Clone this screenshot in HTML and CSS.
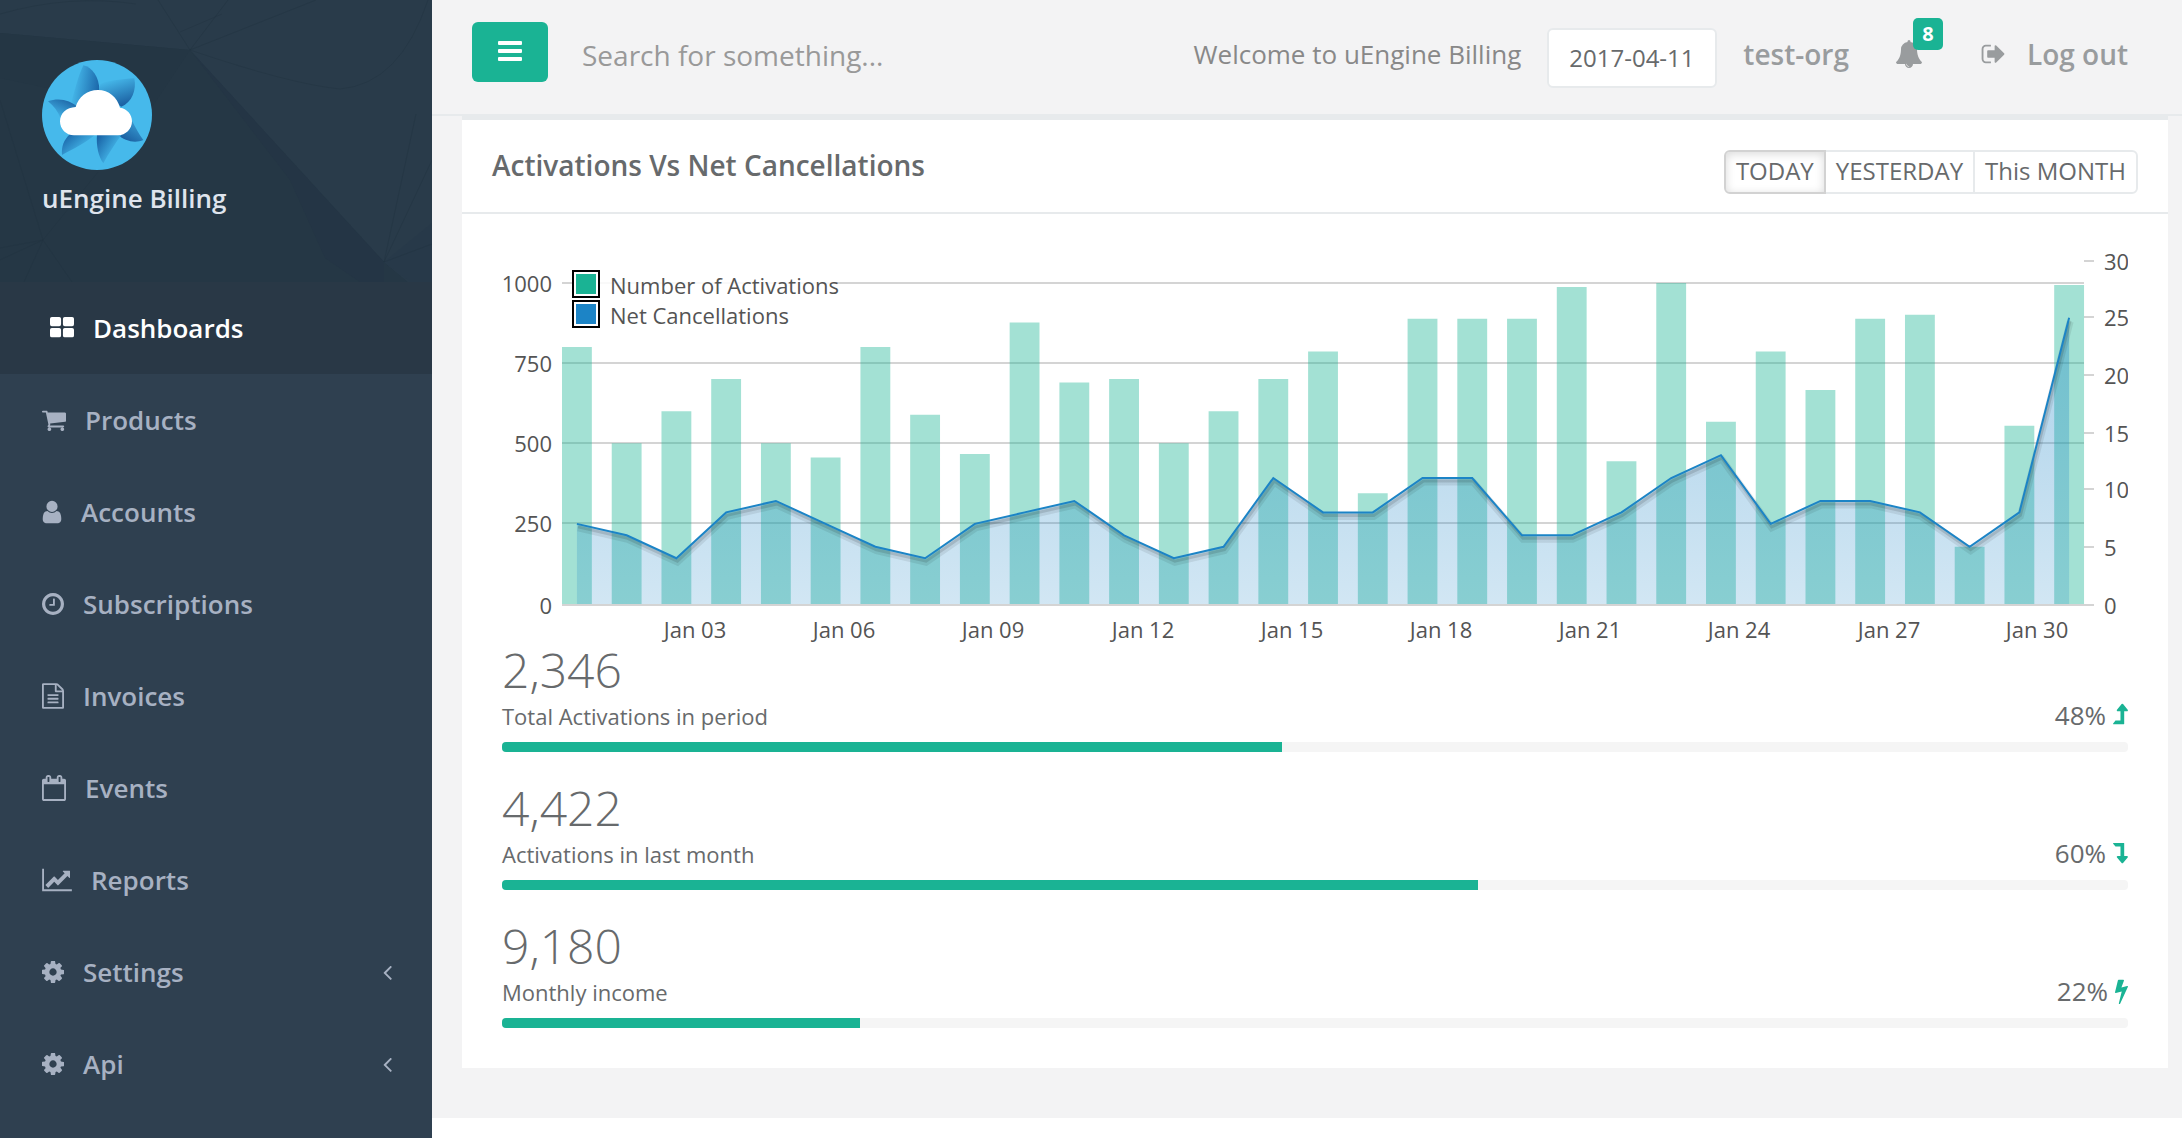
FILE: index.html
```html
<!DOCTYPE html>
<html lang="en">
<head>
<meta charset="utf-8">
<meta name="viewport" content="width=device-width, initial-scale=1">
<title>uEngine Billing</title>
<link rel="stylesheet" href="styles.css">
</head>
<body>
<div class="layout">
  <aside class="sidebar">
    <div class="brand">
      <svg class="brand-pattern" viewBox="0 0 432 282" preserveAspectRatio="none" aria-hidden="true">
        <rect width="432" height="282" fill="#253745"/>
        <path d="M0 0H432V282H408L384 262L190 50L0 33Z" fill="#293b4a"/>
        <path d="M0 33L190 50L150 110L0 78Z" fill="#243644"/>
        <path d="M190 50L384 262V282H360L325 258L290 180Z" fill="#243545"/>
        <path d="M384 262L432 223V282H410Z" fill="#273949"/>
        <path d="M0 14Q70 -6 136 4M158 0L190 50L228 0M190 50L316 0M190 50Q290 84 340 89Q400 84 428 0M180 32L222 14M432 160L384 262L416 114M384 262L432 244M0 100L43 240L24 282M43 240L72 282M0 248L43 240L98 172M0 260L43 240" fill="none" stroke="#223341" stroke-opacity=".45"/>
      </svg>
      <svg class="brand-logo" viewBox="0 0 330 330" role="img" aria-label="uEngine logo">
        <defs>
          <linearGradient id="b1" x1="1" y1=".6" x2=".1" y2=".4"><stop offset="0" stop-color="#1a65a8"/><stop offset="1" stop-color="#46b9eb"/></linearGradient>
          <linearGradient id="b2" x1=".8" y1="1" x2=".4" y2="0"><stop offset="0" stop-color="#17589b"/><stop offset="1" stop-color="#46b9eb"/></linearGradient>
          <linearGradient id="b4" x1="0" y1=".2" x2=".7" y2=".7"><stop offset="0" stop-color="#1a65a8"/><stop offset="1" stop-color="#46b9eb"/></linearGradient>
          <linearGradient id="b5" x1="1" y1="0" x2=".3" y2="1"><stop offset="0" stop-color="#17589b"/><stop offset="1" stop-color="#46b9eb"/></linearGradient>
          <linearGradient id="b3" x1=".2" y1="1" x2=".7" y2="0"><stop offset="0" stop-color="#17589b"/><stop offset="1" stop-color="#46b9eb"/></linearGradient>
        </defs>
        <circle cx="165" cy="165" r="165" fill="#46b9eb"/>
        <path d="M124 16C150 22 172 50 172 92L150 120L85 140C95 100 108 50 124 16Z" fill="url(#b1)"/>
        <path d="M175 72C200 60 240 58 277 55C284 90 270 128 238 140L172 96Z" fill="url(#b2)"/>
        <path d="M245 145C262 160 278 205 304 240C280 250 250 245 225 222Z" fill="url(#b3)"/>
        <path d="M165 222C162 260 170 290 184 310C200 280 220 250 240 222Z" fill="url(#b4)"/>
        <path d="M84 222C65 240 58 260 60 285C95 265 130 250 162 222Z" fill="url(#b4)"/>
        <path d="M18 124C50 112 85 120 108 142L56 176C48 155 36 138 18 124Z" fill="url(#b5)"/>
        <path d="M96 226C72 226 54 207 54 184C54 160 74 142 101 141C109 112 135 90 168 90C200 90 226 112 234 143C255 146 270 163 270 184C270 207 251 226 228 226Z" fill="#fff"/>
      </svg>
      <strong class="brand-name">uEngine Billing</strong>
    </div>
    <nav class="menu">
      <a class="menu-item active" href="#"><svg class="icon w24" viewBox="64 0 1664 1792"><path d="M192 128h512a128 128 0 0 1 128 128v384a128 128 0 0 1-128 128h-512a128 128 0 0 1-128-128v-384a128 128 0 0 1 128-128zM1088 128h512a128 128 0 0 1 128 128v384a128 128 0 0 1-128 128h-512a128 128 0 0 1-128-128v-384a128 128 0 0 1 128-128zM192 896h512a128 128 0 0 1 128 128v384a128 128 0 0 1-128 128h-512a128 128 0 0 1-128-128v-384a128 128 0 0 1 128-128zM1088 896h512a128 128 0 0 1 128 128v384a128 128 0 0 1-128 128h-512a128 128 0 0 1-128-128v-384a128 128 0 0 1 128-128z"/></svg><span>Dashboards</span></a>
      <a class="menu-item" href="#"><svg class="icon w24" viewBox="64 0 1664 1792"><path d="M704 1536q0 52-38 90t-90 38-90-38-38-90 38-90 90-38 90 38 38 90zm896 0q0 52-38 90t-90 38-90-38-38-90 38-90 90-38 90 38 38 90zm128-1088v512q0 24-16.500 42.500t-40.500 21.500l-1044 122q13 60 13 70 0 16-24 64h920q26 0 45 19t19 45-19 45-45 19h-1024q-26 0-45-19t-19-45q0-11 8-31.500t16-36 21.500-40 15.500-29.500l-177-823h-204q-26 0-45-19t-19-45 19-45 45-19h256q16 0 28.500 6.500t19.500 15.500 13 24.500 8 26 5.500 29.500 4.500 26h1201q26 0 45 19t19 45z"/></svg><span>Products</span></a>
      <a class="menu-item" href="#"><svg class="icon w20" viewBox="256 0 1280 1792"><path d="M1536 1399q0 109-62.500 187t-150.500 78h-854q-88 0-150.500-78t-62.500-187q0-85 8.500-160.500t31.500-152 58.500-131 94-89 134.500-34.500q131 128 313 128t313-128q76 0 134.500 34.500t94 89 58.500 131 31.500 152 8.500 160.500zm-256-887q0 159-112.500 271.500t-271.500 112.500-271.500-112.500-112.500-271.500 112.500-271.500 271.500-112.500 271.500 112.500 112.500 271.500z"/></svg><span>Accounts</span></a>
      <a class="menu-item" href="#"><svg class="icon w22" viewBox="128 0 1536 1792"><path d="M1024 544v448q0 14-9 23t-23 9h-320q-14 0-23-9t-9-23v-64q0-14 9-23t23-9h224v-352q0-14 9-23t23-9h64q14 0 23 9t9 23zm416 352q0-148-73-273t-198-198-273-73-273 73-198 198-73 273 73 273 198 198 273 73 273-73 198-198 73-273zm224 0q0 209-103 385.500t-279.500 279.500-385.500 103-385.500-103-279.500-279.500-103-385.500 103-385.500 279.500-279.500 385.500-103 385.500 103 279.500 279.500 103 385.500z"/></svg><span>Subscriptions</span></a>
      <a class="menu-item" href="#"><svg class="icon w22" viewBox="128 0 1536 1792"><path d="M1596 380q28 28 48 76t20 88v1152q0 40-28 68t-68 28h-1344q-40 0-68-28t-28-68v-1600q0-40 28-68t68-28h896q40 0 88 20t76 48zm-444-244v376h376q-10-29-22-41l-313-313q-12-12-41-22zm384 1528v-1024h-416q-40 0-68-28t-28-68v-416h-768v1536h1280zm-1024-864q0-14 9-23t23-9h704q14 0 23 9t9 23v64q0 14-9 23t-23 9h-704q-14 0-23-9t-9-23v-64zm736 224q14 0 23 9t9 23v64q0 14-9 23t-23 9h-704q-14 0-23-9t-9-23v-64q0-14 9-23t23-9h704zm0 256q14 0 23 9t9 23v64q0 14-9 23t-23 9h-704q-14 0-23-9t-9-23v-64q0-14 9-23t23-9h704z"/></svg><span>Invoices</span></a>
      <a class="menu-item" href="#"><svg class="icon w24" viewBox="64 0 1664 1792"><path d="M192 1664h1408v-1024h-1408v1024zm384-1216v-288q0-14-9-23t-23-9h-64q-14 0-23 9t-9 23v288q0 14 9 23t23 9h64q14 0 23-9t9-23zm768 0v-288q0-14-9-23t-23-9h-64q-14 0-23 9t-9 23v288q0 14 9 23t23 9h64q14 0 23-9t9-23zm384-64v1280q0 52-38 90t-90 38h-1408q-52 0-90-38t-38-90v-1280q0-52 38-90t90-38h128v-96q0-66 47-113t113-47h64q66 0 113 47t47 113v96h384v-96q0-66 47-113t113-47h64q66 0 113 47t47 113v96h128q52 0 90 38t38 90z"/></svg><span>Events</span></a>
      <a class="menu-item" href="#"><svg class="icon w30" viewBox="0 0 2048 1792"><path d="M2048 1536v128h-2048v-1536h128v1408h1920zm-128-1248v435q0 21-19.500 29.500t-35.500-7.500l-121-121-633 633q-10 10-23 10t-23-10l-233-233-416 416-192-192 585-585q10-10 23-10t23 10l233 233 464-464-121-121q-16-16-7.500-35.500t29.500-19.500h435q14 0 23 9t9 23z"/></svg><span>Reports</span></a>
      <a class="menu-item" href="#"><svg class="icon w22" viewBox="128 0 1536 1792"><path id="cog" d="M1152 896q0-106-75-181t-181-75-181 75-75 181 75 181 181 75 181-75 75-181zm512-109v222q0 12-8 23t-20 13l-185 28q-19 54-39 91 35 50 107 138 10 12 10 25t-9 23q-27 37-99 108t-94 71q-12 0-26-9l-138-108q-44 23-91 38-16 136-29 186-7 28-36 28h-222q-14 0-24.500-8.500t-11.500-21.500l-28-184q-49-16-90-37l-141 107q-10 9-25 9-14 0-25-11-126-114-165-168-7-10-7-23 0-12 8-23 15-21 51-66.500t54-70.500q-27-50-41-99l-183-27q-13-2-21-12.500t-8-23.500v-222q0-12 8-23t19-13l186-28q14-46 39-92-40-57-107-138-10-12-10-24 0-10 9-23 26-36 98.500-107.500t94.500-71.500q13 0 26 10l138 107q44-23 91-38 16-136 29-186 7-28 36-28h222q14 0 24.500 8.500t11.500 21.500l28 184q49 16 90 37l142-107q9-9 24-9 13 0 25 10 129 119 165 170 7 8 7 22 0 12-8 23-15 21-51 66.500t-54 70.500q26 50 41 98l183 28q13 2 21 12.500t8 23.500z"/></svg><span>Settings</span><svg class="icon arrow" viewBox="576 0 640 1792"><path id="angle" d="M1203 544q0 13-10 23l-393 393 393 393q10 10 10 23t-10 23l-50 50q-10 10-23 10t-23-10l-466-466q-10-10-10-23t10-23l466-466q10-10 23-10t23 10l50 50q10 10 10 23z"/></svg></a>
      <a class="menu-item" href="#"><svg class="icon w22" viewBox="128 0 1536 1792"><use href="#cog"/></svg><span>Api</span><svg class="icon arrow" viewBox="576 0 640 1792"><use href="#angle"/></svg></a>
    </nav>
  </aside>

  <div class="page">
    <header class="topbar">
      <button class="toggle" type="button" aria-label="Toggle menu"><svg viewBox="0 0 24 24"><path d="M1 0H23Q24 0 24 1V3Q24 4 23 4H1Q0 4 0 3V1Q0 0 1 0ZM1 8H23Q24 8 24 9V11Q24 12 23 12H1Q0 12 0 11V9Q0 8 1 8ZM1 16H23Q24 16 24 17V19Q24 20 23 20H1Q0 20 0 19V17Q0 16 1 16Z"/></svg></button>
      <input class="search" type="text" placeholder="Search for something..." aria-label="Search">
      <span class="welcome">Welcome to uEngine Billing</span>
      <input class="date" type="text" value="2017-04-11" aria-label="Billing date">
      <a class="top-link" href="#">test-org</a>
      <a class="bell" href="#" aria-label="Notifications"><svg viewBox="0 0 1792 1792"><path d="M912 1696q0-16-16-16-59 0-101.500-42.500t-42.500-101.500q0-16-16-16t-16 16q0 73 51.500 124.500t124.500 51.500q16 0 16-16zm816-288q0 52-38 90t-90 38h-448q0 106-75 181t-181 75-181-75-75-181h-448q-52 0-90-38t-38-90q50-42 91-88t85-119.500 74.500-158.500 50-206 19.500-260q0-152 117-282.500t307-158.500q-8-19-8-39 0-40 28-68t68-28 68 28 28 68q0 20-8 39 190 28 307 158.500t117 282.500q0 139 19.500 260t50 206 74.500 158.500 85 119.500 91 88z"/></svg><span class="badge">8</span></a>
      <a class="top-link logout" href="#"><svg class="icon w24" viewBox="64 0 1568 1792"><path d="M704 1440q0 4 1 20t.5 26.500-3 23.500-10 19.500-20.500 6.500h-320q-119 0-203.500-84.500t-84.500-203.500v-704q0-119 84.500-203.500t203.500-84.500h320q13 0 22.500 9.500t9.500 22.500q0 4 1 20t.5 26.500-3 23.500-10 19.500-20.500 6.500h-320q-66 0-113 47t-47 113v704q0 66 47 113t113 47h312l11.500 1 11.500 3 8 5.500 7 9 2 13.500zm928-544q0 26-19 45l-544 544q-19 19-45 19t-45-19-19-45v-288h-448q-26 0-45-19t-19-45v-384q0-26 19-45t45-19h448v-288q0-26 19-45t45-19 45 19l544 544q19 19 19 45z"/></svg><span>Log out</span></a>
    </header>

    <main class="content">
      <section class="card">
        <div class="card-head">
          <h1 class="card-title">Activations Vs Net Cancellations</h1>
          <div class="range">
            <button class="range-btn pressed" type="button">TODAY</button>
            <button class="range-btn" type="button">YESTERDAY</button>
            <button class="range-btn" type="button">This MONTH</button>
          </div>
        </div>
        <div class="card-body">
          <svg class="chart" viewBox="0 0 1626 400" role="img" aria-label="Activations and net cancellations in January">
            <defs>
              <linearGradient id="area" gradientUnits="userSpaceOnUse" x1="0" y1="30" x2="0" y2="0">
                <stop offset="0" stop-color="#1c84c6" stop-opacity=".4"/>
                <stop offset="1" stop-color="#1c84c6" stop-opacity=".2"/>
              </linearGradient>
              <path id="trend" d="M.3 7L1.3 6L2.3 4L3.3 8L4.3 9L5.3 7L6.3 5L7.3 4L8.3 7L9.3 8L10.3 9L11.3 6L12.3 4L13.3 5L14.3 11L15.3 8L16.3 8L17.3 11L18.3 11L19.3 6L20.3 6L21.3 8L22.3 11L23.3 13L24.3 7L25.3 9L26.3 9L27.3 8L28.3 5L29.3 8L30.3 25" vector-effect="non-scaling-stroke"/>
            </defs>
            <path class="grid" d="M60 39H1582M60 119H1582M60 199H1582M60 279H1582M60 361H1592M1582 17H1592M1582 73H1592M1582 131H1592M1582 189H1592M1582 245H1592M1582 303H1592"/>
            <!-- one unit is one day across, one activation up -->
            <g transform="translate(60 360) scale(49.74 -.3213)">
              <path class="bars" d="M0 0V800h.6V0zM1 0V500h.6V0zM2 0V600h.6V0zM3 0V700h.6V0zM4 0V500h.6V0zM5 0V456h.6V0zM6 0V800h.6V0zM7 0V589h.6V0zM8 0V467h.6V0zM9 0V876h.6V0zM10 0V689h.6V0zM11 0V700h.6V0zM12 0V500h.6V0zM13 0V600h.6V0zM14 0V700h.6V0zM15 0V786h.6V0zM16 0V345h.6V0zM17 0V888h.6V0zM18 0V888h.6V0zM19 0V888h.6V0zM20 0V987h.6V0zM21 0V444h.6V0zM22 0V999h.6V0zM23 0V567h.6V0zM24 0V786h.6V0zM25 0V666h.6V0zM26 0V888h.6V0zM27 0V900h.6V0zM28 0V178h.6V0zM29 0V555h.6V0zM30 0V993h.6V0z"/>
            </g>
            <!-- one unit is one day across, one cancellation up -->
            <g transform="translate(60 360) scale(49.74 -11.45)">
              <path fill="url(#area)" d="M.3 0V7L1.3 6L2.3 4L3.3 8L4.3 9L5.3 7L6.3 5L7.3 4L8.3 7L9.3 8L10.3 9L11.3 6L12.3 4L13.3 5L14.3 11L15.3 8L16.3 8L17.3 11L18.3 11L19.3 6L20.3 6L21.3 8L22.3 11L23.3 13L24.3 7L25.3 9L26.3 9L27.3 8L28.3 5L29.3 8L30.3 25V0z"/>
            </g>
            <g transform="translate(61 364) scale(49.74 -11.45)"><use class="shade wide" href="#trend"/></g>
            <g transform="translate(61 363) scale(49.74 -11.45)"><use class="shade" href="#trend"/></g>
            <g transform="translate(60 360) scale(49.74 -11.45)"><use class="line" href="#trend"/></g>

            <rect x="70" y="25" width="264" height="60" fill="#fff" fill-opacity=".85"/>
            <g class="key">
              <rect x="71" y="27" width="26" height="26"/><rect x="71" y="57" width="26" height="26"/>
            </g>
            <rect x="74" y="30" width="20" height="20" fill="#1ab394"/>
            <rect x="74" y="60" width="20" height="20" fill="#1c84c6"/>
            <g class="labels">
              <text x="108" y="50">Number of Activations</text><text x="108" y="80">Net Cancellations</text>
            </g>
            <g class="labels end">
              <text x="50" y="48">1000</text><text x="50" y="128">750</text><text x="50" y="208">500</text><text x="50" y="288">250</text><text x="50" y="370">0</text>
            </g>
            <g class="labels">
              <text x="1602" y="26">30</text><text x="1602" y="82">25</text><text x="1602" y="140">20</text><text x="1602" y="198">15</text><text x="1602" y="254">10</text><text x="1602" y="312">5</text><text x="1602" y="370">0</text>
            </g>
            <g class="labels middle">
              <text x="193" y="394">Jan 03</text><text x="342" y="394">Jan 06</text><text x="491" y="394">Jan 09</text><text x="641" y="394">Jan 12</text><text x="790" y="394">Jan 15</text><text x="939" y="394">Jan 18</text><text x="1088" y="394">Jan 21</text><text x="1237" y="394">Jan 24</text><text x="1387" y="394">Jan 27</text><text x="1535" y="394">Jan 30</text>
            </g>
          </svg>
          <ul class="stats">
            <li>
              <h2 class="figure">2,346</h2>
              <div class="caption"><span>Total Activations in period</span><span class="share">48% <svg class="w15" viewBox="386 0 1028 1792"><path id="level" d="M1405 595q-18 37-58 37h-192v864q0 14-9 23t-23 9h-704q-21 0-29-18-8-20 4-35l160-192q9-11 25-11h320v-640h-192q-40 0-58-37-17-37 9-68l320-384q18-22 49-22t49 22l320 384q27 32 9 68z"/></svg></span></div>
              <div class="track"><div class="fill" style="width:48%"></div></div>
            </li>
            <li>
              <h2 class="figure">4,422</h2>
              <div class="caption"><span>Activations in last month</span><span class="share">60% <svg class="w15" viewBox="386 0 1028 1792"><use href="#level" transform="matrix(1 0 0 -1 0 1728)"/></svg></span></div>
              <div class="track"><div class="fill" style="width:60%"></div></div>
            </li>
            <li>
              <h2 class="figure">9,180</h2>
              <div class="caption"><span>Monthly income</span><span class="share">22% <svg class="w13" viewBox="448 0 896 1792"><path d="M1333 566q18 20 7 44l-540 1157q-13 25-42 25-4 0-14-2-17-5-25.500-19t-4.500-30l197-808-406 101q-4 1-12 1-18 0-31-11-18-15-13-39l201-825q4-14 16-23t28-9h328q19 0 32 12.500t13 29.500q0 8-5 18l-171 463 396-98q8-2 12-2 19 0 34 15z"/></svg></span></div>
              <div class="track"><div class="fill" style="width:22%"></div></div>
            </li>
          </ul>
        </div>
      </section>
    </main>
  </div>
</div>
</body>
</html>
```
FILE: styles.css
```css
* { box-sizing: border-box; }

body {
  margin: 0;
  background: #fff;
  color: #676a6c;
  font: 26px/36px "Open Sans", sans-serif;
}

a { color: inherit; text-decoration: none; }
button, input { font: inherit; color: inherit; margin: 0; }
svg { display: block; fill: currentColor; }

.layout { display: flex; min-height: 100vh; }

/* Sidebar */
.sidebar { flex: 0 0 432px; background: #2f4050; color: #a7b1c2; }
.brand { position: relative; height: 282px; padding: 60px 42px 0; }
.brand-pattern { position: absolute; inset: 0; width: 100%; height: 100%; }
.brand-logo { position: relative; width: 110px; height: 110px; }
.brand-name { position: relative; display: block; margin-top: 10px; color: #dfe4ed; font-weight: 600; }

.menu-item { display: flex; align-items: center; height: 92px; padding: 0 40px 0 42px; font-weight: 600; }
.menu-item.active { padding-left: 50px; background: #293846; color: #fff; }
.menu-item span { margin-left: 19px; }
.icon { flex: none; height: 26px; }
.arrow { width: 9px; margin-left: auto; }
.w13 { width: 13px; }
.w15 { width: 15px; }
.w20 { width: 20px; }
.w22 { width: 22px; }
.w24 { width: 24px; }
.w30 { width: 30px; }

/* Top bar */
.page { flex: 1; min-width: 0; }
.topbar {
  display: flex;
  align-items: center;
  height: 116px;
  padding: 0 54px 6px 40px;
  border-bottom: 2px solid #e7eaec;
  background: #f3f3f4;
}
.toggle {
  display: flex;
  align-items: center;
  justify-content: center;
  width: 76px;
  height: 60px;
  margin-bottom: 4px;
  padding: 2px 0 0;
  border: 0;
  border-radius: 6px;
  background: #1ab394;
  color: #fff;
}
.toggle svg { width: 24px; height: 24px; }
.search { flex: 1; min-width: 0; height: 60px; margin-left: 20px; padding: 2px 12px 0 14px; border: 0; background: none; font-size: 28px; }
.search::placeholder { color: #999; opacity: 1; }
.welcome { color: #888; white-space: nowrap; }
.date {
  width: 170px;
  height: 60px;
  margin: 8px 26px 0;
  padding: 0 20px 2px;
  border: 2px solid #e7eaec;
  border-radius: 6px;
  background: #fff;
  font-size: 24px;
}
.top-link { color: #999c9e; font-size: 28px; font-weight: 600; white-space: nowrap; }
.bell { position: relative; margin: 0 58px 0 46px; color: #999c9e; }
.bell svg { width: 28px; height: 28px; }
.badge {
  position: absolute;
  left: 18px;
  top: -22px;
  width: 30px;
  height: 32px;
  border-radius: 5px;
  background: #1ab394;
  color: #fff;
  font-size: 20px;
  font-weight: 700;
  line-height: 32px;
  text-align: center;
}
.logout { display: flex; align-items: center; gap: 22px; }

/* Card */
.content { padding: 0 14px 50px 30px; background: #f3f3f4; }
.card { border-top: 4px solid #e7eaec; background: #fff; }
.card-head {
  display: flex;
  align-items: flex-start;
  justify-content: space-between;
  padding: 30px 30px 18px;
  border-bottom: 2px solid #e7eaec;
}
.card-title { margin: 0; font-size: 28px; line-height: 30px; font-weight: 600; }
.range { display: flex; }
.range-btn {
  height: 44px;
  margin-left: -2px;
  padding: 0 10px 2px;
  border: 2px solid #e7eaec;
  background: #fff;
  font-size: 24px;
  line-height: 36px;
}
.range-btn:first-child { border-radius: 6px 0 0 6px; }
.range-btn:last-child { border-radius: 0 6px 6px 0; }
.range-btn.pressed { position: relative; border-color: #d2d2d2; box-shadow: inset 0 2px 10px rgba(0, 0, 0, .15); }

.card-body { padding: 30px 40px 40px; }

/* Chart */
.chart { width: 100%; height: auto; }
.grid { fill: none; stroke: #d4d4d4; stroke-width: 2; }
.bars { fill: #1ab394; fill-opacity: .4; }
.line { fill: none; stroke: #1c84c6; stroke-width: 2; }
.shade { fill: none; stroke: #000; stroke-opacity: .12; stroke-width: 3; }
.shade.wide { stroke-opacity: .08; stroke-width: 7; }
.key { fill: #fff; stroke: #000; stroke-width: 2; }
.labels { fill: #545454; font-size: 22px; }
.end { text-anchor: end; }
.middle { text-anchor: middle; }

/* Stats */
.stats { display: grid; gap: 30px; margin: 0; padding: 0; list-style: none; }
.figure { margin: 0; font-size: 48px; line-height: 52px; font-weight: 300; }
.caption { display: flex; align-items: baseline; justify-content: space-between; height: 38px; font-size: 22px; line-height: 38px; }
.share { display: flex; align-items: center; gap: 7px; font-size: 26px; }
.share svg { height: 26px; color: #1ab394; }
.track { height: 10px; margin-top: 8px; border-radius: 4px; background: #f5f5f5; overflow: hidden; }
.fill { height: 100%; background: #1ab394; }
```
